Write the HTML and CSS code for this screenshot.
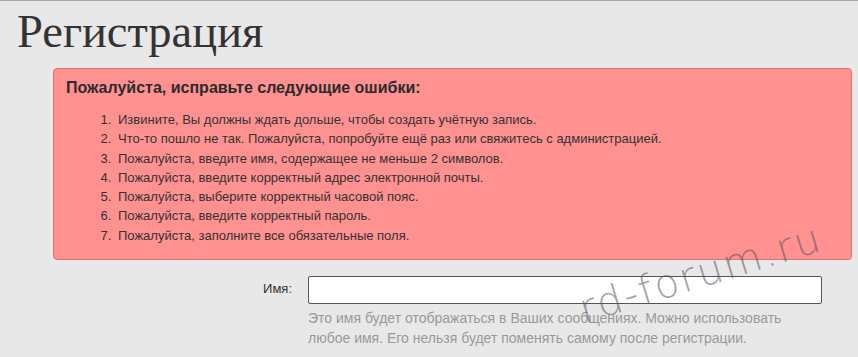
FILE: index.html
```html
<!DOCTYPE html>
<html lang="ru">
<head>
    <meta charset="UTF-8">
    <meta name="viewport" content="width=device-width, initial-scale=1.0">
    <title>Регистрация</title>
    <link rel="stylesheet" href="styles.css">
</head>
<body>

    <div class="page">
        <h1>Регистрация</h1>

        <!-- Error block -->
        <div class="errors">
            <h3>Пожалуйста, исправьте следующие ошибки:</h3>
            <ol>
                <li>Извините, Вы должны ждать дольше, чтобы создать учётную запись.</li>
                <li>Что-то пошло не так. Пожалуйста, попробуйте ещё раз или свяжитесь с администрацией.</li>
                <li>Пожалуйста, введите имя, содержащее не меньше 2 символов.</li>
                <li>Пожалуйста, введите корректный адрес электронной почты.</li>
                <li>Пожалуйста, выберите корректный часовой пояс.</li>
                <li>Пожалуйста, введите корректный пароль.</li>
                <li>Пожалуйста, заполните все обязательные поля.</li>
            </ol>
        </div>

        <div class="field">
            <label for="name">Имя:</label>
            <div class="field-body">
                <input type="text" id="name" class="text-input">
                <p class="hint">Это имя будет отображаться в Ваших сообщениях. Можно использовать любое имя. Его нельзя будет поменять самому после регистрации.</p>
            </div>
        </div>
    </div>

    <div class="watermark">rd-forum.ru</div>

</body>
</html>
```

FILE: styles.css
```css
* { margin: 0; padding: 0; box-sizing: border-box; }
body {
    background: #e8e8e8;
    border-top: 1px solid #a8a8a8;
    font-family: 'Liberation Sans', Arial, sans-serif;
    color: #333;
    overflow: hidden;
}
.page {
    padding: 0 6px 0 17px;
}
h1 {
    font-family: 'Liberation Serif', 'Times New Roman', serif;
    font-weight: normal;
    font-size: 46.5px;
    line-height: 50px;
    color: #333;
    padding-top: 6px;
    height: 67px;
}
.errors {
    margin-left: 36px;
    background: #ff9191;
    border: 1px solid #d87474;
    border-radius: 4px;
    padding: 10px 12px 14px 12px;
}
.errors h3 {
    font-size: 16px;
    font-weight: bold;
    line-height: 18px;
    color: #2b2b2b;
    margin-bottom: 13px;
}
.errors ol {
    padding-left: 49px;
    font-size: 13px;
    line-height: 19.3px;
    color: #333;
}
.errors li {
    padding-left: 3px;
}
.field {
    display: flex;
    margin-top: 16px;
}
.field label {
    width: 291px;
    text-align: right;
    font-size: 13px;
    padding-top: 5px;
    padding-right: 16px;
    color: #333;
}
.field-body {
    width: 514px;
}
.text-input {
    display: block;
    width: 514px;
    height: 28px;
    border: 1px solid #555;
    border-radius: 2px;
    background: #fff;
}
.hint {
    font-size: 14px;
    line-height: 20px;
    color: #999;
    margin-top: 4px;
}
.watermark {
    position: absolute;
    left: 586px;
    top: 289px;
    font-family: 'DejaVu Sans', sans-serif;
    font-weight: 200;
    font-size: 40px;
    line-height: 40px;
    letter-spacing: 2px;
    color: rgba(80, 80, 100, 0.55);
    transform: rotate(-17deg);
    transform-origin: 0 100%;
    white-space: nowrap;
}
```
